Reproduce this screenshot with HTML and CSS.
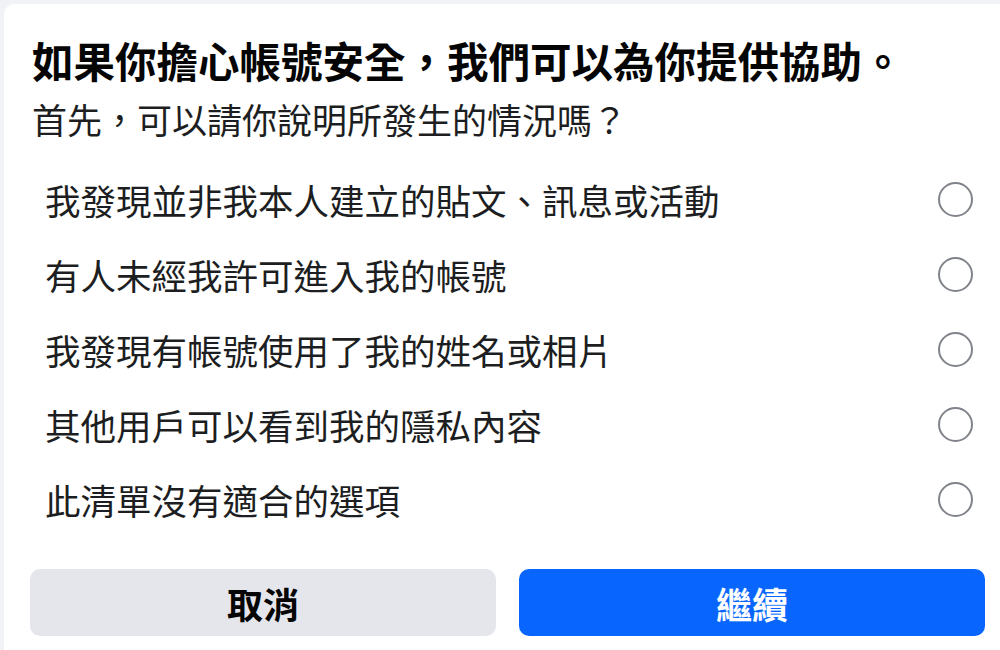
FILE: index.html
```html
<!DOCTYPE html>
<html lang="zh-Hant">
<head>
<meta charset="utf-8">
<link rel="stylesheet" href="styles.css">
</head>
<body>
<div class="card">
  <h1 class="title">如果你擔心帳號安全，我們可以為你提供協助。</h1>
  <p class="subtitle">首先，可以請你說明所發生的情況嗎？</p>
  <ul class="options">
    <li class="option"><span class="label">我發現並非我本人建立的貼文、訊息或活動</span><span class="radio"></span></li>
    <li class="option"><span class="label">有人未經我許可進入我的帳號</span><span class="radio"></span></li>
    <li class="option"><span class="label">我發現有帳號使用了我的姓名或相片</span><span class="radio"></span></li>
    <li class="option"><span class="label">其他用戶可以看到我的隱私內容</span><span class="radio"></span></li>
    <li class="option"><span class="label">此清單沒有適合的選項</span><span class="radio"></span></li>
  </ul>
  <div class="actions">
    <button class="btn btn-cancel">取消</button>
    <button class="btn btn-primary">繼續</button>
  </div>
</div>
</body>
</html>
```

FILE: styles.css
```css
* { box-sizing: border-box; }
html, body { margin: 0; padding: 0; }
body {
  background: #f0f2f5;
  font-family: "Noto Sans CJK TC", "Noto Sans", sans-serif;
  width: 1000px;
  height: 650px;
  overflow: hidden;
}
.card {
  margin: 4px 0 0 4px;
  height: 646px;
  background: #ffffff;
  border-radius: 10px 0 0 0;
  padding-top: 30px;
  display: flex;
  flex-direction: column;
}
.title {
  margin: 0;
  padding-left: 28px;
  font-size: 41.5px;
  line-height: 52px;
  font-weight: 700;
  color: #050505;
}
.subtitle {
  margin: 11px 0 0 0;
  padding-left: 28px;
  font-size: 35px;
  line-height: 44px;
  font-weight: 400;
  color: #1c1e21;
}
.options {
  list-style: none;
  margin: 21px 0 0 0;
  padding: 0 27px 0 41px;
}
.option {
  height: 75px;
  display: flex;
  align-items: center;
  justify-content: space-between;
}
.label {
  font-size: 35.5px;
  line-height: 44px;
  color: #1c1e21;
}
.radio {
  width: 35px;
  height: 35px;
  border: 2px solid #80848a;
  border-radius: 50%;
  flex: none;
}
.actions {
  margin-top: 32px;
  padding: 0 15px 0 26px;
  display: grid;
  grid-template-columns: 1fr 1fr;
  column-gap: 23px;
}
.btn {
  height: 67px;
  border: none;
  border-radius: 10px;
  font-family: "Noto Sans CJK TC", "Noto Sans", sans-serif;
  font-size: 36px;
  font-weight: 700;
  padding: 0;
}
.btn-cancel {
  background: #e4e6eb;
  color: #050505;
}
.btn-primary {
  background: #0866ff;
  color: #ffffff;
}
```
